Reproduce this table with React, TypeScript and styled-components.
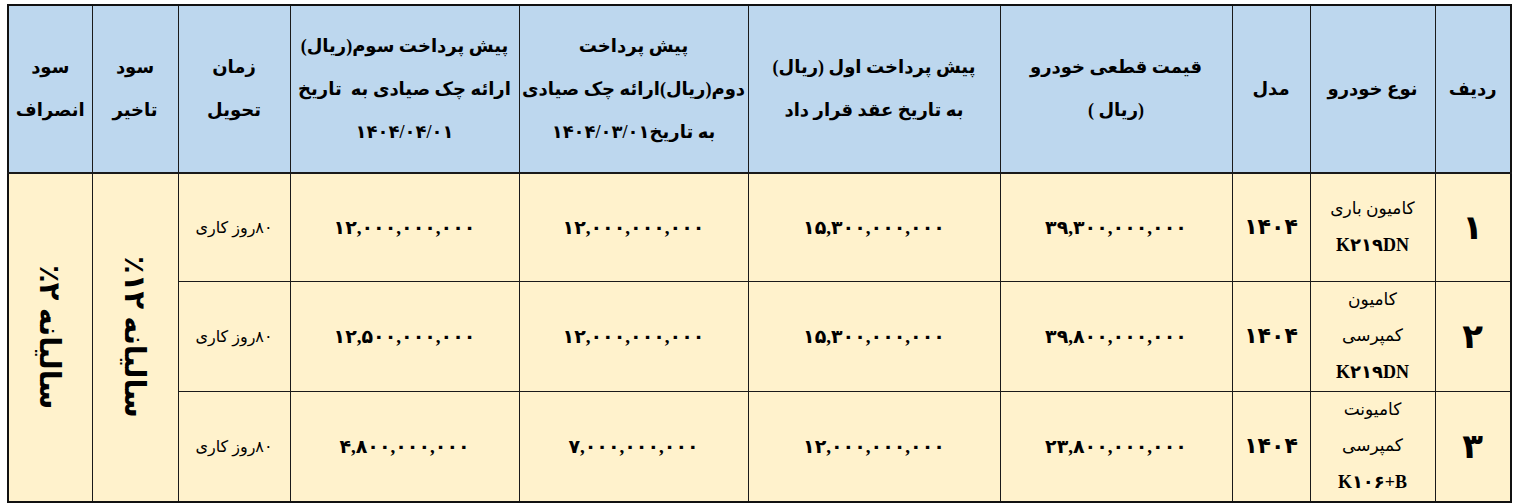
import React from "react";
import styled, { createGlobalStyle } from "styled-components";

const GlobalStyle = createGlobalStyle`
  html, body {
    margin: 0;
    padding: 0;
    background: #ffffff;
  }
  body {
    font-family: "Liberation Serif", "DejaVu Sans", sans-serif;
    color: #000;
  }
`;

const Page = styled.div`
  padding: 4px 8px 0 7px;
`;

const Table = styled.table`
  direction: rtl;
  border-collapse: collapse;
  table-layout: fixed;
  width: 1503px;
  border: 2px solid #111;
`;

const HeadRow = styled.tr`
  height: 168px;
`;

const HeadCell = styled.th`
  background: #bdd7ee;
  border: 1px solid #1a1a1a;
  border-bottom: 2px solid #1a1a1a;
  padding: 0;
  font-size: 18px;
  font-weight: 700;
  line-height: 43px;
  white-space: nowrap;
  text-align: center;
  vertical-align: middle;
`;

const Row = styled.tr`
  height: 108px;
`;

const Cell = styled.td<{ $size?: number }>`
  background: #fff2cc;
  border: 1px solid #1a1a1a;
  padding: 0 4px;
  text-align: center;
  vertical-align: middle;
  font-weight: 700;
  font-size: ${(p) => p.$size ?? 19}px;
`;

const ModelCell = styled(Cell)`
  font-size: 17px;
  font-weight: 400;
  line-height: 36px;
`;

const ModelCode = styled.span`
  font-family: "Liberation Serif", "DejaVu Sans", serif;
  font-weight: 700;
  font-size: 18px;
  direction: ltr;
  unicode-bidi: isolate;
`;

const DeliveryCell = styled(Cell)`
  font-size: 16px;
  font-weight: 400;
`;

const VerticalCell = styled(Cell)`
  font-size: 29px;
`;

const VerticalText = styled.div`
  writing-mode: vertical-rl;
  direction: rtl;
  margin: 0 auto;
  white-space: nowrap;
`;

const headers: React.ReactNode[] = [
  "ردیف",
  "نوع خودرو",
  "مدل",
  <>قیمت قطعی خودرو<br />(ریال )</>,
  <>پیش پرداخت اول (ریال)<br />به تاریخ عقد قرار داد</>,
  <>پیش پرداخت<br />دوم(ریال)ارائه چک صیادی<br />به تاریخ۱۴۰۴/۰۳/۰۱</>,
  <>پیش پرداخت سوم(ریال)<br />ارائه چک صیادی به&nbsp; تاریخ<br />۱۴۰۴/۰۴/۰۱</>,
  <>زمان<br />تحویل</>,
  <>سود<br />تاخیر</>,
  <>سود<br />انصراف</>,
];

const widths = [76, 125, 78, 232, 252, 229, 229, 112, 86, 84];

interface Vehicle {
  no: string;
  name: string[];
  code: string;
  model: string;
  price: string;
  first: string;
  second: string;
  third: string;
}

const vehicles: Vehicle[] = [
  {
    no: "۱",
    name: ["کامیون باری"],
    code: "K۲۱۹DN",
    model: "۱۴۰۴",
    price: "۳۹,۳۰۰,۰۰۰,۰۰۰",
    first: "۱۵,۳۰۰,۰۰۰,۰۰۰",
    second: "۱۲,۰۰۰,۰۰۰,۰۰۰",
    third: "۱۲,۰۰۰,۰۰۰,۰۰۰",
  },
  {
    no: "۲",
    name: ["کامیون", "کمپرسی"],
    code: "K۲۱۹DN",
    model: "۱۴۰۴",
    price: "۳۹,۸۰۰,۰۰۰,۰۰۰",
    first: "۱۵,۳۰۰,۰۰۰,۰۰۰",
    second: "۱۲,۰۰۰,۰۰۰,۰۰۰",
    third: "۱۲,۵۰۰,۰۰۰,۰۰۰",
  },
  {
    no: "۳",
    name: ["کامیونت", "کمپرسی"],
    code: "K۱۰۶+B",
    model: "۱۴۰۴",
    price: "۲۳,۸۰۰,۰۰۰,۰۰۰",
    first: "۱۲,۰۰۰,۰۰۰,۰۰۰",
    second: "۷,۰۰۰,۰۰۰,۰۰۰",
    third: "۴,۸۰۰,۰۰۰,۰۰۰",
  },
];

export default function App() {
  return (
    <Page>
      <GlobalStyle />
      <Table>
        <colgroup>
          {widths.map((w, i) => (
            <col key={i} style={{ width: w }} />
          ))}
        </colgroup>
        <thead>
          <HeadRow>
            {headers.map((h, i) => (
              <HeadCell key={i}>{h}</HeadCell>
            ))}
          </HeadRow>
        </thead>
        <tbody>
          {vehicles.map((v, i) => (
            <Row key={v.no}>
              <Cell $size={34}>{v.no}</Cell>
              <ModelCell>
                {v.name.map((n) => (
                  <div key={n}>{n}</div>
                ))}
                <ModelCode>{v.code}</ModelCode>
              </ModelCell>
              <Cell $size={22}>{v.model}</Cell>
              <Cell>{v.price}</Cell>
              <Cell>{v.first}</Cell>
              <Cell>{v.second}</Cell>
              <Cell>{v.third}</Cell>
              <DeliveryCell>۸۰روز کاری</DeliveryCell>
              {i === 0 && (
                <>
                  <VerticalCell rowSpan={3}>
                    <VerticalText>سالیانه ۱۲٪</VerticalText>
                  </VerticalCell>
                  <VerticalCell rowSpan={3}>
                    <VerticalText>سالیانه ۲٪</VerticalText>
                  </VerticalCell>
                </>
              )}
            </Row>
          ))}
        </tbody>
      </Table>
    </Page>
  );
}
